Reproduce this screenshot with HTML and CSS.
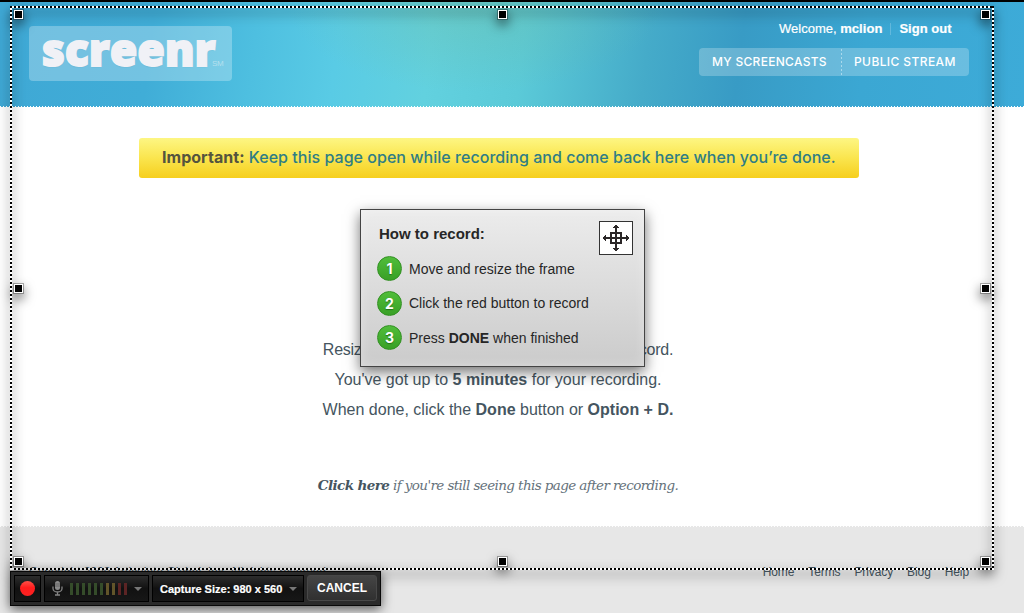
FILE: index.html
```html
<!DOCTYPE html>
<html lang="en">
<head>
<meta charset="utf-8">
<title>Screenr</title>
<link rel="stylesheet" href="styles.css">
</head>
<body>
<div class="page">
  <header class="header">
    <div class="logo"><span class="logo-word">screenr</span><span class="logo-mark">SM</span></div>
    <div class="account">
      <div class="welcome"><span>Welcome, <b class="user">mclion</b></span><i class="bar"></i><b class="signout">Sign out</b></div>
      <nav class="nav"><a class="nav-a">MY SCREENCASTS</a><a class="nav-b">PUBLIC STREAM</a></nav>
    </div>
  </header>
  <main class="main">
    <div class="banner"><p><b>Important:</b> <span>Keep this page open while recording and come back here when you’re done.</span></p></div>
    <div class="copy">
      <p class="l1">Resize the frame and click the red button to record.</p>
      <p class="l2">You've got up to <b>5 minutes</b> for your recording.</p>
      <p class="l3">When done, click the <b>Done</b> button or <b>Option + D.</b></p>
    </div>
    <p class="fallback"><b>Click here</b> if you're still seeing this page after recording.</p>
  </main>
  <footer class="footer">
    <span class="copyright">Copyright 2009 Articulate Global, Inc. All rights reserved.</span>
    <nav class="links"><a>Home</a><a>Terms</a><a>Privacy</a><a>Blog</a><a>Help</a></nav>
  </footer>
</div>

<div class="frame">
  <i class="edge top"></i><i class="edge bottom"></i><i class="edge left"></i><i class="edge right"></i>
  <i class="handle n w"></i><i class="handle n c"></i><i class="handle n e"></i>
  <i class="handle m w"></i><i class="handle m e"></i>
  <i class="handle s w"></i><i class="handle s c"></i><i class="handle s e"></i>
</div>

<section class="howto">
  <div class="howto-head">
    <h2>How to record:</h2>
    <svg class="move" width="34" height="34" viewBox="0 0 34 34" shape-rendering="crispEdges">
      <rect x=".5" y=".5" width="33" height="33" fill="#fff" stroke="#333"/>
      <path d="M17 5v25M5 17h24M12 12h10v10H12z" fill="none" stroke="#2b2728" stroke-width="2"/>
      <path d="M16 4h2v1h1v1h1v1h-6V6h1V5h1zM16 30h2v-1h1v-1h1v-1h-6v1h1v1h1zM4 16v2h1v1h1v1h1v-6H6v1H5v1zM30 16v2h-1v1h-1v1h-1v-6h1v1h1v1z" fill="#2b2728"/>
    </svg>
  </div>
  <ol>
    <li><span class="num">1</span><span class="step s1">Move and resize the frame</span></li>
    <li><span class="num">2</span><span class="step s2">Click the red button to record</span></li>
    <li><span class="num">3</span><span class="step s3">Press <b>DONE</b> when finished</span></li>
  </ol>
</section>

<div class="toolbar">
  <div class="cell rec"><i class="dot"></i></div>
  <div class="cell mic">
    <svg class="mic-icon" width="11" height="15" viewBox="0 0 11 15">
      <rect x="3" y="0" width="5" height="9" rx="2.5" fill="#8b8b8b"/>
      <path d="M3 3h5M3 5h5" stroke="#555" stroke-width=".7"/>
      <path d="M1 5.5v2a4.5 3.5 0 0 0 9 0v-2M5.500 11v3M3 14h5" fill="none" stroke="#858585" stroke-width="1.3"/>
    </svg>
    <span class="meter"><i></i><i></i><i></i><i></i><i></i><i></i><i class="amber"></i><i class="amber"></i><i class="red"></i><i class="red"></i></span>
    <i class="caret"></i>
  </div>
  <div class="cell size"><b>Capture Size: 980 x 560</b><i class="caret"></i></div>
  <div class="cancel"><b>CANCEL</b></div>
</div>
</body>
</html>
```

FILE: styles.css
```css
* { box-sizing: border-box; }
html, body, p, h2, ol { margin: 0; padding: 0; }
body { width: 1024px; height: 613px; overflow: hidden; position: relative; background: #fff; font-family: "Liberation Sans", Arial, sans-serif; color: #455560; }
i { display: block; }
b { font-weight: 700; }
span, a, p, h2 { white-space: nowrap; }

.page { display: flex; flex-direction: column; height: 613px; }
.header {
  height: 107px; flex: none; border-top: 2px solid #000; padding: 19px 55px 0 29px;
  display: flex; justify-content: space-between; position: relative;
  background:
    radial-gradient(ellipse 190px 90px at 475px 0, #6fb99b60, #6fb99b00),
    linear-gradient(97deg, #3fa8d5 0, #40add7 15%, #4ebfe0 25%, #59cbe5 33%, #62d1df 42%, #5bcad8 51%, #45abc9 63%, #389bc5 72%, #3ba7d3 84%, #3dabd8 100%);
}
.header::after { content: ""; position: absolute; left: 0; right: 0; bottom: 0; height: 1px; background: repeating-linear-gradient(90deg, #fff 0 1px, transparent 1px 3px); }
.logo { margin-top: 5px; width: 203px; height: 55px; border-radius: 4px; background: rgba(255,255,255,.27); display: flex; align-items: baseline; padding-left: 13px; }
.logo-word { font: 800 44px/47px "Open Sans", sans-serif; letter-spacing: .3px; color: #f0f1f6; -webkit-text-stroke: 2px #f0f1f6; text-shadow: 0 1px 1px rgba(30,90,120,.4); width: 170px; }
.logo-mark { font-size: 8px; color: #b5e0ee; letter-spacing: -.4px; }
.account { width: 270px; }
.welcome { display: flex; margin-left: 80px; font-size: 13px; line-height: 16px; color: #fff; -webkit-text-stroke: .2px #fff; }
.bar { width: 1px; height: 12px; margin: 2px 8px 0 8px; background: #62b9dd; }
.user { letter-spacing: .05px; }
.signout { letter-spacing: .02px; }
.nav { display: flex; margin-top: 11px; width: 270px; height: 28px; border-radius: 4px; background: rgba(255,255,255,.24); color: #fff; font: 500 12px/28px Inter, sans-serif; }
.nav-a { width: 143px; padding-left: 13px; letter-spacing: .3px; background: linear-gradient(transparent 50%, #a9d9ec 50%) right 3px / 1px 4px repeat-y; }
.nav-b { padding-left: 12px; letter-spacing: .4px; }

.main { height: 419px; flex: none; padding-top: 31px; }
.banner { width: 720px; height: 40px; margin-left: 139px; border-radius: 3px; background: linear-gradient(#fdf683, #fae54e 50%, #f6cf1e); padding-left: 23px; font: 500 16px/39px Inter, sans-serif; letter-spacing: .03px; color: #2f7d85; }
.banner b { color: #55543e; }
.copy { margin-top: 157px; width: 996px; display: flex; flex-direction: column; align-items: center; font-size: 16px; line-height: 30px; }
.l1 { letter-spacing: -.24px; }
.fallback { width: 996px; text-align: center; margin-top: 50px; font: italic 13.500px/20px "DejaVu Serif", Georgia, serif; color: #65727b; letter-spacing: -.6px; }
.fallback b { color: #455560; }
.footer { flex: 1; background: #e7e7e7; display: flex; justify-content: space-between; padding: 39px 55px 0 29px; font-size: 12px; line-height: 14px; position: relative; }
.footer::before { content: ""; position: absolute; left: 0; right: 0; top: 0; height: 1px; background: repeating-linear-gradient(90deg, #fff 0 1px, transparent 1px 3px); }
.links { display: flex; gap: 14px; letter-spacing: -.1px; }

.frame { position: absolute; left: 10px; top: 6px; width: 984px; height: 564px; filter: drop-shadow(0 5px 6px rgba(0,0,0,.7)); }
.edge { position: absolute; }
.top, .bottom { left: 0; right: 0; height: 2px; background: repeating-linear-gradient(90deg, #000 0 2px, #fff 2px 4px); }
.left, .right { top: 0; bottom: 0; width: 2px; background: repeating-linear-gradient(#000 0 2px, #fff 2px 4px); }
.top { top: 0; } .bottom { bottom: 0; } .left { left: 0; } .right { right: 0; }
.handle { position: absolute; width: 9px; height: 9px; background: #000; border: 1px solid #fff; outline: 1px solid rgba(0,0,0,.3); }
.n { top: 4px; } .m { top: 278px; } .s { top: 551px; }
.w { left: 4px; } .c { left: 488px; } .e { left: 971px; }

.howto { position: absolute; left: 360px; top: 209px; width: 285px; height: 158px; border: 1px solid #444; background: linear-gradient(#ececec, #cbcbcb); box-shadow: 0 5px 13px rgba(0,0,0,.55), inset 0 0 12px rgba(255,255,255,.35); padding: 11px 11px 0 16px; color: #262626; }
.howto-head { display: flex; justify-content: space-between; height: 35px; }
.howto h2 { font-size: 15px; line-height: 26px; padding-left: 2px; }
.howto ol { list-style: none; display: flex; flex-direction: column; gap: 9.500px; }
.howto li { display: flex; align-items: center; height: 25px; font-size: 14px; }
.num { width: 25px; height: 25px; margin-right: 7px; border-radius: 50%; background: linear-gradient(#50bd3a, #39a026); border: 1px solid #329022; color: #fff; text-align: center; font: 700 14px/23px Inter, sans-serif; text-shadow: 0 1px 1px #23721a; }

.toolbar { position: absolute; left: 10px; top: 571px; width: 371px; height: 35px; background: #2a2a2a; border: 1px solid #080808; padding: 3px; display: flex; gap: 3px; box-shadow: 0 3px 12px rgba(0,0,0,.65); color: #fff; }
.cell { height: 27px; flex: none; border: 1px solid #000; background: linear-gradient(#2d2d2d, #111 50%, #171717); display: flex; align-items: center; }
.rec { width: 27px; justify-content: center; }
.dot { width: 15px; height: 15px; border-radius: 50%; background: linear-gradient(#ff5048, #ff1d1d 45%, #fc2222); }
.mic { width: 105px; padding-left: 7px; }
.meter { display: flex; gap: 3px; margin: 0 7px 0 7px; }
.meter i { width: 3px; height: 12px; background: #354c2a; }
.meter .amber { background: #62552a; }
.meter .red { background: #5c2424; }
.caret { width: 0; height: 0; border: 4px solid transparent; border-top-color: #777; border-bottom: 0; }
.size { width: 152px; padding-left: 7px; font-size: 11px; justify-content: space-between; padding-right: 6px; }
.size b { -webkit-text-stroke: .2px #fff; }
.cancel { flex: 1; height: 26px; border-radius: 3px; background: linear-gradient(#454545, #303030); border: 1px solid #484848; text-align: center; font-size: 12px; line-height: 25px; }
```
